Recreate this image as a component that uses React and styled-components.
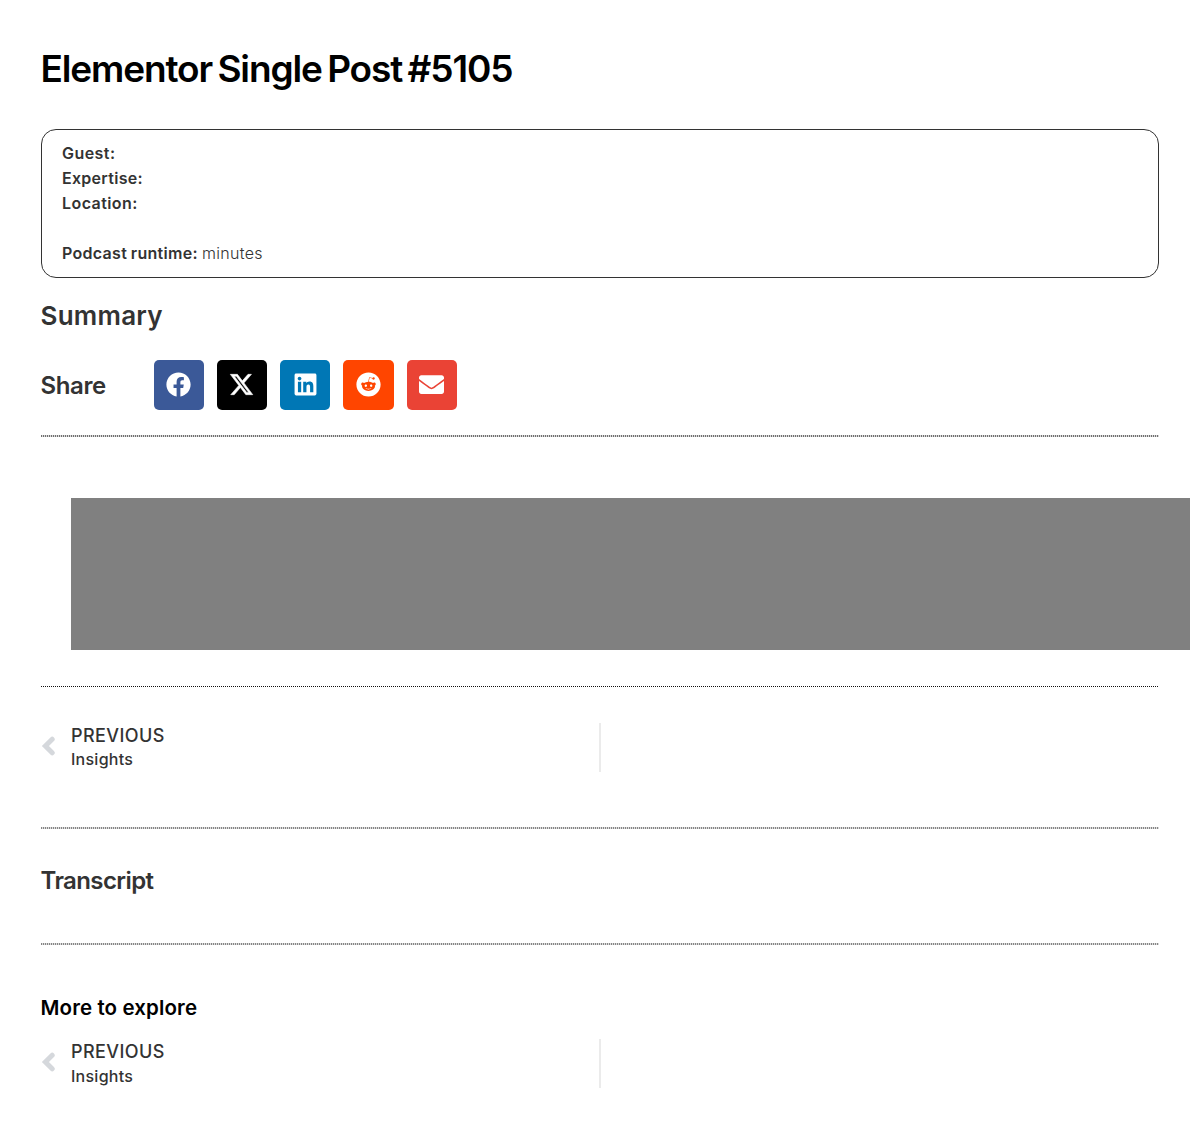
import React from "react";
import styled, { createGlobalStyle } from "styled-components";
import { FaFacebook, FaLinkedin, FaReddit, FaEnvelope } from "react-icons/fa";
import { FaXTwitter } from "react-icons/fa6";

const GlobalStyle = createGlobalStyle`
  * { box-sizing: border-box; }
  body { margin: 0; background: #fff; color: #333; font-family: Inter, "Open Sans", sans-serif; overflow-x: hidden; }
`;

const Page = styled.main`
  display: flex;
  flex-direction: column;
  height: 1129px;
  padding: 49px 40.6px 0 40.5px;
`;

const Heading = styled.h2`
  margin: ${(p) => p.$margin || "0"};
  font-size: ${(p) => p.$size}px;
  line-height: ${(p) => p.$line}px;
  font-weight: ${(p) => p.$weight || 580};
  letter-spacing: ${(p) => p.$track || 0}px;
  word-spacing: ${(p) => p.$space || 0}px;
  color: ${(p) => p.$color || "#333"};
  white-space: nowrap;
`;

const InfoBox = styled.section`
  height: 149px;
  margin-top: 40px;
  padding: 10.5px 20.5px;
  border: 1px solid #333;
  border-radius: 15px;
`;

const InfoLine = styled.p`
  height: 25.2px;
  margin: 0;
  font-size: 16px;
  line-height: 25.2px;
  font-weight: 300;
  letter-spacing: 0.3px;
  word-spacing: -0.7px;
`;

const Label = styled.strong`
  font-weight: 600;
  letter-spacing: ${(p) => p.$track}px;
`;

const ShareRow = styled.section`
  display: flex;
  align-items: center;
  height: 50px;
  margin-top: 27px;
`;

const ShareTitle = styled.div`
  width: 113px;
  padding-top: 1px;
`;

const Buttons = styled.div`
  display: flex;
  gap: 13.1px;
`;

const ShareButton = styled.a`
  display: flex;
  align-items: center;
  justify-content: center;
  width: 50.2px;
  height: 50px;
  padding-bottom: 1px;
  border-radius: 5px;
  background: ${(p) => p.$bg};
  color: #fff;
  font-size: 25px;

  svg {
    stroke-width: ${(p) => p.$stroke || 0};
  }
`;

const Divider = styled.div`
  flex: none;
  height: ${(p) => p.$height || 1}px;
  margin-top: ${(p) => p.$top}px;
  background: repeating-linear-gradient(90deg, ${(p) => p.$ink || "#111"} 0 1px, ${(p) => p.$gap || "#fff"} 1px 2px);
`;

const Banner = styled.div`
  flex: none;
  width: 1119px;
  height: 152px;
  margin: 61px 0 0 30.5px;
  background: #808080;
`;

const PostNav = styled.nav`
  display: flex;
  height: 49px;
  margin-top: ${(p) => p.$top}px;
`;

const PrevLink = styled.a`
  display: flex;
  align-items: center;
  width: calc(50% + 1px);
  border-right: 2px solid #ebebeb;
`;

const Arrow = styled.svg`
  width: 15px;
  height: 20px;
  margin: 0 15.5px 3px 0;
  fill: none;
  stroke: #d5d8dc;
  stroke-width: 5;
  stroke-linecap: round;
`;

const NavText = styled.span`
  display: flex;
  flex-direction: column;
  align-self: flex-start;
`;

const Direction = styled.span`
  font-size: 18px;
  line-height: 25px;
  font-weight: 530;
  letter-spacing: 0.4px;
`;

const PostTitle = styled.span`
  margin-top: ${(p) => p.$shift || 0}px;
  font-size: 16px;
  line-height: 24px;
  font-weight: 530;
  letter-spacing: 0.25px;
`;

const networks = [
  { name: "Facebook", color: "#3b5998", Icon: FaFacebook },
  { name: "X", color: "#000", Icon: FaXTwitter, stroke: 12 },
  { name: "LinkedIn", color: "#0077b5", Icon: FaLinkedin },
  { name: "Reddit", color: "#ff4500", Icon: FaReddit },
  { name: "Email", color: "#ea4335", Icon: FaEnvelope },
];

function Previous({ top, shift }) {
  return (
    <PostNav $top={top}>
      <PrevLink>
        <Arrow viewBox="0 0 15 20"><path d="M11.2 3.2 4.4 10l6.8 6.8" /></Arrow>
        <NavText>
          <Direction>PREVIOUS</Direction>
          <PostTitle $shift={shift}>Insights</PostTitle>
        </NavText>
      </PrevLink>
    </PostNav>
  );
}

export default function App() {
  return (
    <>
      <GlobalStyle />
      <Page>
        <Heading as="h1" $size={37} $line={40} $weight={560} $track={-1.14} $space={-2.7} $color="#000">Elementor Single Post #5105</Heading>
        <InfoBox>
          <InfoLine><Label $track={0.45}>Guest:</Label></InfoLine>
          <InfoLine><Label $track={0.28}>Expertise:</Label></InfoLine>
          <InfoLine><Label $track={0.42}>Location:</Label></InfoLine>
          <InfoLine />
          <InfoLine><Label $track={0.3}>Podcast runtime:</Label> minutes</InfoLine>
        </InfoBox>
        <Heading $size={26} $line={34} $track={0.25} $margin="21px 0 0">Summary</Heading>
        <ShareRow>
          <ShareTitle><Heading $size={24} $line={30} $track={-0.4}>Share</Heading></ShareTitle>
          <Buttons>
            {networks.map(({ name, color, Icon, stroke }) => (
              <ShareButton key={name} $bg={color} $stroke={stroke}><Icon /></ShareButton>
            ))}
          </Buttons>
        </ShareRow>
        <Divider $top={25} $height={2} $ink="#707070" $gap="#d8d8d8" />
        <Banner />
        <Divider $top={36} />
        <Previous top={36} shift={-1} />
        <Divider $top={55} $height={2} $ink="#858585" $gap="#dcdcdc" />
        <Heading $size={24} $line={30} $track={-0.6} $margin="37px 0 0">Transcript</Heading>
        <Divider $top={47} $height={2} $ink="#858585" $gap="#dcdcdc" />
        <Heading $size={20.5} $line={28} $track={0.12} $color="#000" $margin="49px 0 0">More to explore</Heading>
        <Previous top={17} />
      </Page>
    </>
  );
}
